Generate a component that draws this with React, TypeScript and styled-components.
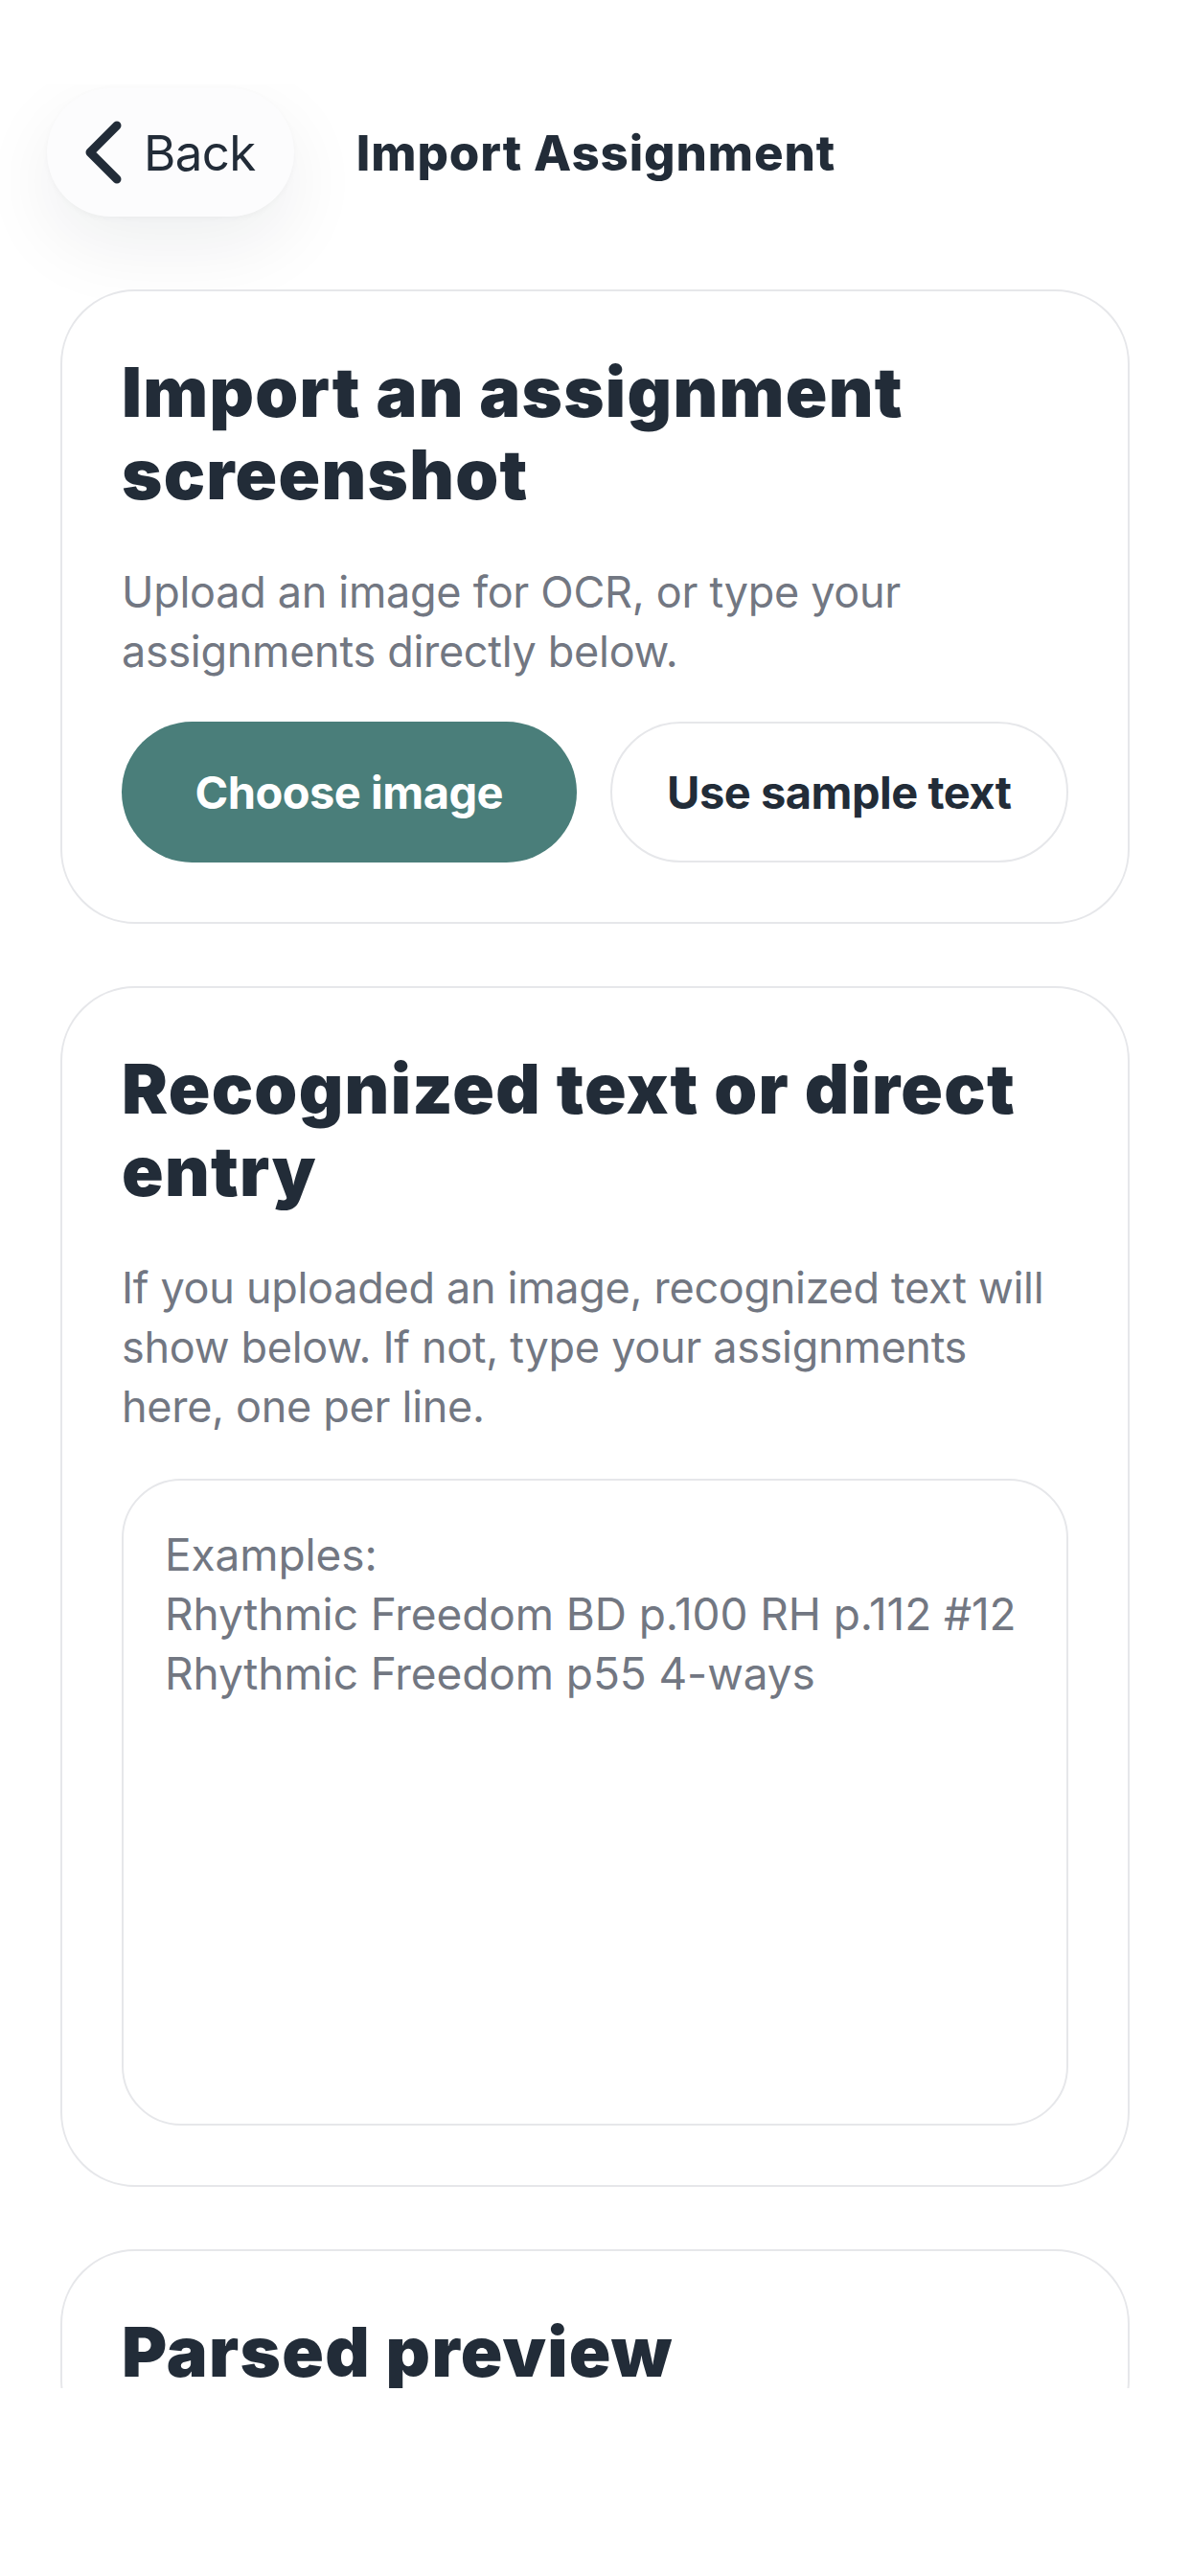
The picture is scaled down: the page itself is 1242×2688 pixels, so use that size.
import React from "react";
import styled, { createGlobalStyle } from "styled-components";

const GlobalStyle = createGlobalStyle`
  html, body {
    margin: 0;
    padding: 0;
    background: #ffffff;
  }
  body {
    font-family: Inter, "Noto Sans", "Liberation Sans", sans-serif;
    -webkit-font-smoothing: antialiased;
  }
  * { box-sizing: border-box; }
`;

const Page = styled.div`
  width: 1242px;
  height: 2688px;
  background: #ffffff;
  display: flex;
  flex-direction: column;
`;

const StatusArea = styled.div`
  height: 88px;
  flex: none;
  background: #ffffff;
`;

const Screen = styled.main`
  height: 2404px;
  flex: none;
  overflow: hidden;
  display: flex;
  flex-direction: column;
  padding-top: 4px;
`;

const Header = styled.header`
  display: flex;
  align-items: center;
  gap: 65px;
  padding-left: 49px;
  height: 134px;
  flex: none;
`;

const BackButton = styled.button`
  display: flex;
  align-items: center;
  gap: 22px;
  height: 134px;
  padding: 0 40px 0 39px;
  border: none;
  border-radius: 67px;
  background: #fcfcfd;
  box-shadow: 0 30px 80px rgba(20, 30, 40, 0.07), 0 2px 6px rgba(20, 30, 40, 0.03);
  color: #222c38;
  font-family: Inter, "Liberation Sans", sans-serif;
  font-size: 51px;
  font-weight: 400;
  letter-spacing: -0.6px;
  cursor: pointer;
`;

const Title = styled.h1`
  margin: 0;
  font-size: 51px;
  font-weight: 800;
  color: #222c38;
  letter-spacing: 0.9px;
`;

const Content = styled.div`
  display: flex;
  flex-direction: column;
  gap: 65px;
  padding: 76px 63px 0;
`;

const Card = styled.section`
  background: #ffffff;
  border: 2px solid #e6e7ea;
  border-radius: 78px;
  padding: 62px;
  display: flex;
  flex-direction: column;
  position: relative;
  z-index: 1;
`;

const Heading = styled.h2`
  margin: 0;
  font-size: 72px;
  line-height: 86px;
  font-weight: 900;
  color: #222c38;
  letter-spacing: 1.3px;
`;

const Description = styled.p<{ $gapTop: number }>`
  margin: ${(p) => p.$gapTop}px 0 0;
  font-size: 45px;
  line-height: 62px;
  font-weight: 400;
  color: #727782;
  letter-spacing: -0.3px;
`;

const ButtonRow = styled.div`
  display: flex;
  gap: 35px;
  margin-top: 42px;
`;

const PillButton = styled.button<{ $primary?: boolean }>`
  flex: 1;
  height: 147px;
  border-radius: 74px;
  border: ${(p) => (p.$primary ? "none" : "2px solid #e6e7ea")};
  background: ${(p) => (p.$primary ? "#4a7e7a" : "#ffffff")};
  color: ${(p) => (p.$primary ? "#ffffff" : "#222c38")};
  font-family: Inter, "Liberation Sans", sans-serif;
  font-size: 47px;
  font-weight: 700;
  letter-spacing: -0.5px;
  cursor: pointer;
`;

const EntryArea = styled.textarea`
  margin-top: 44px;
  height: 675px;
  width: 100%;
  resize: none;
  border: 2px solid #e6e7ea;
  border-radius: 62px;
  padding: 46px 43px;
  font-family: Inter, "Liberation Sans", sans-serif;
  font-size: 46px;
  line-height: 62px;
  color: #222c38;
  letter-spacing: -0.1px;
  background: #ffffff;
  outline: none;
  &::placeholder {
    color: #727782;
    opacity: 1;
  }
`;

const Chevron = () => (
  <svg width="40" height="66" viewBox="0 0 40 66" aria-hidden="true">
    <polyline
      points="34,5 6,33 34,61"
      fill="none"
      stroke="#222c38"
      strokeWidth="9"
      strokeLinecap="round"
      strokeLinejoin="round"
    />
  </svg>
);

export default function App() {
  return (
    <Page>
      <GlobalStyle />
      <StatusArea />
      <Screen>
        <Header>
          <BackButton>
            <Chevron />
            Back
          </BackButton>
          <Title>Import Assignment</Title>
        </Header>
        <Content>
          <Card>
            <Heading>Import an assignment screenshot</Heading>
            <Description $gapTop={49}>
              Upload an image for OCR, or type your assignments directly below.
            </Description>
            <ButtonRow>
              <PillButton $primary>Choose image</PillButton>
              <PillButton>Use sample text</PillButton>
            </ButtonRow>
          </Card>
          <Card>
            <Heading>Recognized text or direct entry</Heading>
            <Description $gapTop={48}>
              If you uploaded an image, recognized text will show below. If not, type your
              assignments here, one per line.
            </Description>
            <EntryArea
              placeholder={
                "Examples:\nRhythmic Freedom BD p.100 RH p.112 #12\nRhythmic Freedom p55 4-ways"
              }
            />
          </Card>
          <Card>
            <Heading>Parsed preview</Heading>
          </Card>
        </Content>
      </Screen>
    </Page>
  );
}
